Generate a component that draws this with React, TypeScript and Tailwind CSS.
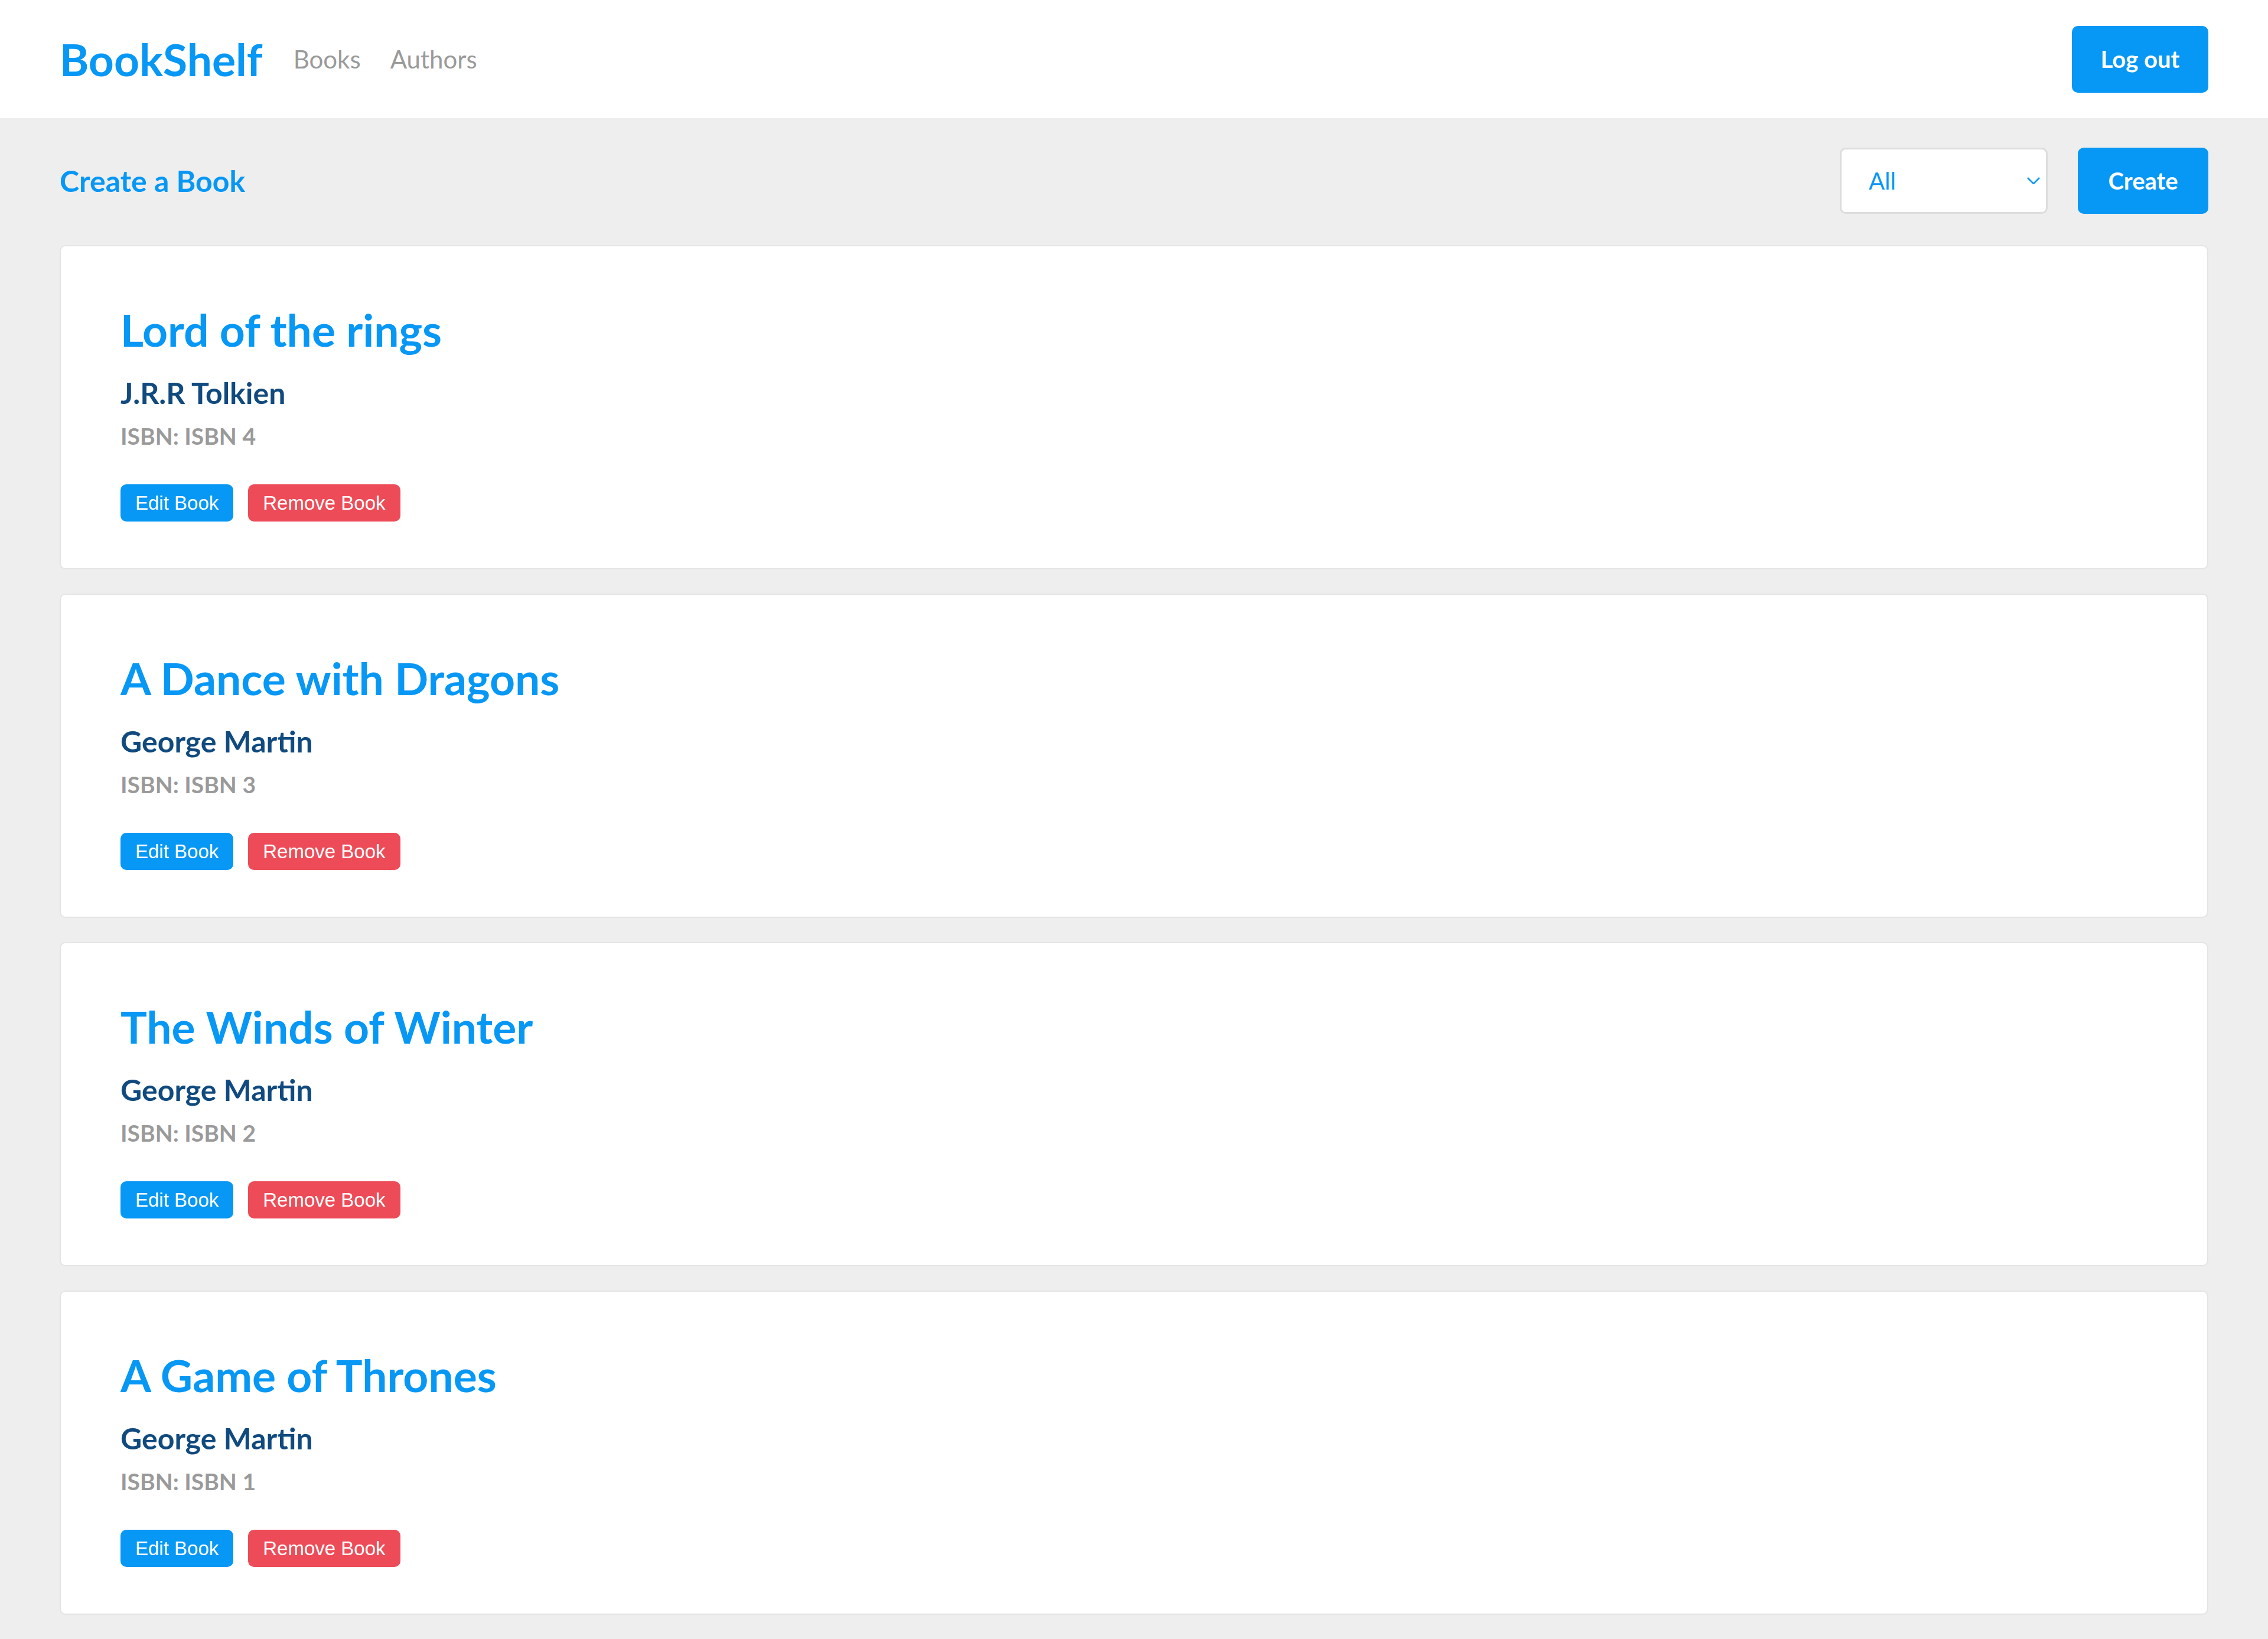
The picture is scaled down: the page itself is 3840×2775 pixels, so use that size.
import React, { useState } from 'react';

type Book = {
  id: number;
  title: string;
  author: string;
  isbn: string;
};

const books: Book[] = [
  { id: 4, title: 'Lord of the rings', author: 'J.R.R Tolkien', isbn: 'ISBN 4' },
  { id: 3, title: 'A Dance with Dragons', author: 'George Martin', isbn: 'ISBN 3' },
  { id: 2, title: 'The Winds of Winter', author: 'George Martin', isbn: 'ISBN 2' },
  { id: 1, title: 'A Game of Thrones', author: 'George Martin', isbn: 'ISBN 1' },
];

function BookCard({ book }: { book: Book }) {
  return (
    <div className="bg-white border-2 border-[#e4e4e4] rounded-[10px] pt-[104px] pb-[79px] px-[101px]">
      <h2 className="text-[75px] leading-none font-bold text-[#0797f5]">{book.title}</h2>
      <h3 className="mt-[44px] text-[50px] leading-none font-bold text-[#104a7f]">{book.author}</h3>
      <p className="mt-[29px] text-[39px] leading-none font-bold text-[#9a9a9a]">ISBN: {book.isbn}</p>
      <div className="mt-[62px] flex gap-[25px] font-['Liberation_Sans',Arial,sans-serif]">
        <button className="h-[63px] px-[25px] rounded-[10px] bg-[#0797f5] text-white text-[33px] cursor-pointer">
          Edit Book
        </button>
        <button className="h-[63px] px-[25px] rounded-[10px] bg-[#ee4b58] text-white text-[33px] cursor-pointer">
          Remove Book
        </button>
      </div>
    </div>
  );
}

export default function App() {
  const [filter, setFilter] = useState('all');

  return (
    <div className="min-h-screen bg-[#eeeeee] font-['Lato','Open_Sans',sans-serif]">
      {/* top bar */}
      <header className="h-[200px] bg-white px-[101px] flex items-center justify-between">
        <div className="flex items-center">
          <a href="#" className="text-[75px] leading-none font-bold text-[#0797f5]">
            BookShelf
          </a>
          <nav className="ml-[52px] flex items-center gap-[50px] text-[42px] leading-none text-[#9a9a9a]">
            <a href="#">Books</a>
            <a href="#">Authors</a>
          </nav>
        </div>
        <button className="w-[231px] h-[113px] rounded-[10px] bg-[#0797f5] text-white text-[40px] font-bold cursor-pointer">
          Log out
        </button>
      </header>

      <main className="px-[101px] pt-[50px] pb-[41px]">
        <div className="h-[112px] flex items-center justify-between mb-[53px]">
          <a href="#" className="text-[50px] leading-none font-bold text-[#0797f5]">
            Create a Book
          </a>
          <div className="flex items-center gap-[51px]">
            <div className="relative">
              <select
                value={filter}
                onChange={(e) => setFilter(e.target.value)}
                className="appearance-none w-[352px] h-[112px] pl-[46px] pr-[60px] bg-white border-[3px] border-[#dddddd] rounded-[10px] text-[40px] text-[#0797f5] outline-none"
              >
                <option value="all">All</option>
                <option value="tolkien">J.R.R Tolkien</option>
                <option value="martin">George Martin</option>
              </select>
              <svg
                className="absolute right-[13px] top-[50%] -translate-y-1/2 pointer-events-none"
                width="22"
                height="12"
                viewBox="0 0 22 12"
                fill="none"
              >
                <path d="M1 1l10 10L21 1" stroke="#0797f5" strokeWidth="2.5" />
              </svg>
            </div>
            <button className="w-[221px] h-[112px] rounded-[10px] bg-[#0797f5] text-white text-[40px] font-bold cursor-pointer">
              Create
            </button>
          </div>
        </div>

        <div className="flex flex-col gap-[41px]">
          {books.map((b) => (
            <BookCard key={b.id} book={b} />
          ))}
        </div>
      </main>
    </div>
  );
}
